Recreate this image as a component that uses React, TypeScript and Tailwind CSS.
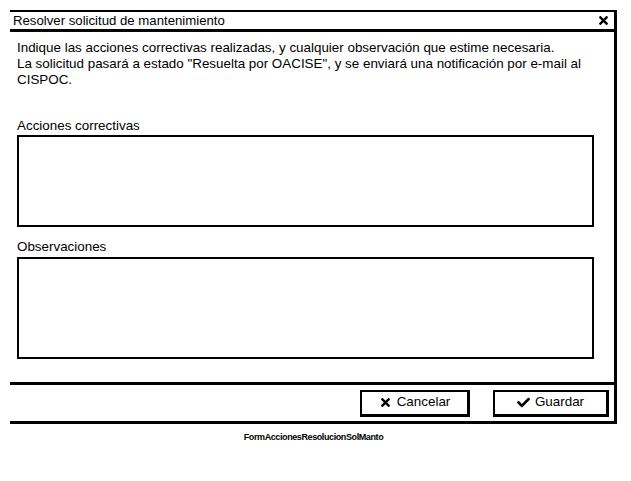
import React from 'react';
import { FaTimes, FaCheck } from 'react-icons/fa';

const font = { fontFamily: '"Liberation Sans", Arial, sans-serif' };

const App: React.FC = () => {
  return (
    <div className="w-[631px] h-[481px] bg-white pt-[10px] text-black" style={font}>
      <div className="ml-[10px] w-[607px] border-t-[2px] border-r-[3px] border-b-[3px] border-black">
        {/* title bar */}
        <div className="h-[20px] flex items-center justify-between pl-[3px] pr-[4px] border-b-[3px] border-black">
          <span className="text-[13.2px] leading-none pt-[1px]">Resolver solicitud de mantenimiento</span>
          <FaTimes className="w-[13px] h-[13px]" />
        </div>

        {/* body */}
        <div className="px-[7px] pt-[8px] pb-[23px] border-b-[3px] border-black">
          <p className="text-[13.4px] leading-[16px]">
            Indique las acciones correctivas realizadas, y cualquier observación que estime necesaria.
            <br />
            La solicitud pasará a estado "Resuelta por OACISE", y se enviará una notificación por e-mail al CISPOC.
          </p>

          <label className="block mt-[30px] text-[13.4px] leading-[16px]">Acciones correctivas</label>
          <div className="mt-[1px] w-[577px] h-[92px] border-2 border-black" />

          <label className="block mt-[12px] text-[13.4px] leading-[16px]">Observaciones</label>
          <div className="mt-[2px] w-[577px] h-[102px] border-2 border-black" />
        </div>

        {/* footer */}
        <div className="h-[36px] flex items-center justify-end gap-[23px] pr-[5px]">
          <button className="w-[110px] h-[27px] flex items-center justify-center gap-[5px] bg-white border-2 border-r-[3px] border-b-[3px] border-black text-[13.4px]">
            <FaTimes className="w-[13px] h-[13px]" />
            Cancelar
          </button>
          <button className="w-[116px] h-[27px] flex items-center justify-center gap-[5px] bg-white border-2 border-r-[3px] border-b-[3px] border-black text-[13.4px]">
            <FaCheck className="w-[13px] h-[13px]" />
            Guardar
          </button>
        </div>
      </div>

      <div className="mt-[7px] text-center text-[9px] font-bold tracking-[-0.4px] pr-[4px]">
        FormAccionesResolucionSolManto
      </div>
    </div>
  );
};

export default App;
